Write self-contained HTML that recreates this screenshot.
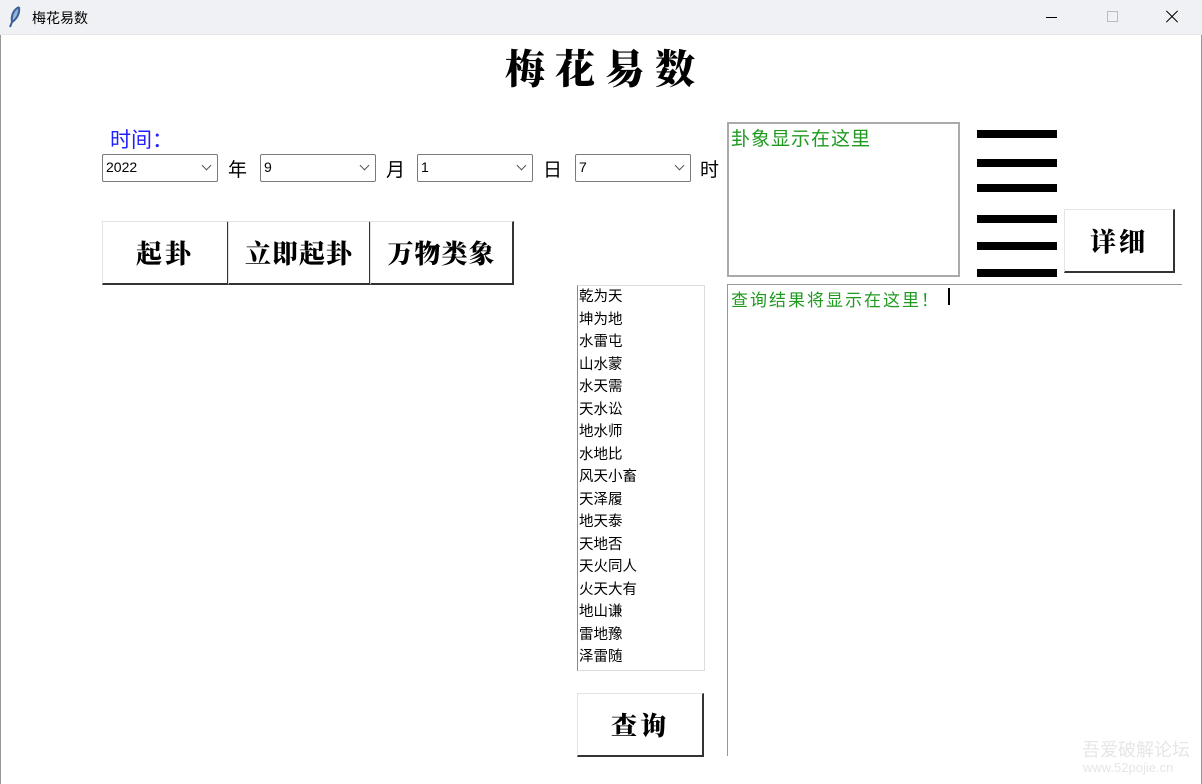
<!DOCTYPE html>
<html><head><meta charset="utf-8"><style>
*{margin:0;padding:0;box-sizing:border-box}
body{width:1202px;height:784px;background:#fff;position:relative;overflow:hidden;font-family:"Liberation Sans","Noto Sans CJK SC",sans-serif;color:#000}
.a{position:absolute}
.tb{left:0;top:0;width:1202px;height:35px;background:#eff1f4;border-bottom:1px solid #e5e5e5}
.cb{height:28px;width:116px;border:1px solid #7a7a7a;border-radius:2px;background:#fff;font-size:14px;padding:4px 3px;top:154px}
.cb::after{content:"";position:absolute;right:7px;top:7px;width:6px;height:6px;border-right:1px solid #555;border-bottom:1px solid #555;transform:rotate(45deg)}
.lb{font-size:19px;top:155px}
.btn{background:#fff;border-top:1px solid #e3e3e3;border-left:1px solid #e3e3e3;border-right:2px solid #333;border-bottom:2px solid #333;display:flex;align-items:center;justify-content:center;font-family:"Noto Serif CJK SC",serif;font-weight:900;font-size:26px;letter-spacing:3px}
.ln{left:977px;width:80px;height:8px;background:#000}
.li{font-size:14.5px;line-height:22.5px;left:579px}
.g{color:#1f9a1f;font-family:"Liberation Sans","Noto Sans CJK SC",sans-serif}
</style></head><body>
<div class="a tb"></div>
<svg class="a" style="left:8px;top:6px" width="14" height="22" viewBox="0 0 14 22"><path d="M11 1 C5 4 3 10 4 16 L2 21 M11 1 C12 7 9 13 4 16" stroke="#3a5f9a" stroke-width="2" fill="#8fb0d8"/></svg>
<div class="a" style="left:32px;top:8px;font-size:14px">梅花易数</div>
<div class="a" style="left:1046px;top:17px;width:11px;height:1px;background:#000"></div>
<div class="a" style="left:1107px;top:11px;width:11px;height:11px;border:1px solid #bbb"></div>
<div class="a" style="left:1164px;top:16px;width:16px;height:1px;background:#000;transform:rotate(45deg)"></div>
<div class="a" style="left:1164px;top:16px;width:16px;height:1px;background:#000;transform:rotate(-45deg)"></div>
<div class="a" style="left:0;top:35px;width:1px;height:749px;background:#999"></div>
<div class="a" style="left:1201px;top:35px;width:1px;height:749px;background:#999"></div>

<div class="a" style="left:490px;top:38px;width:220px;text-align:center;font-family:'Noto Serif CJK SC',serif;font-weight:900;font-size:40px;letter-spacing:10px;padding-left:10px">梅花易数</div>
<div class="a" style="left:110px;top:124px;font-size:21px;color:#2020ff">时间：</div>

<div class="a cb" style="left:102px">2022</div><div class="a lb" style="left:228px">年</div>
<div class="a cb" style="left:260px">9</div><div class="a lb" style="left:386px">月</div>
<div class="a cb" style="left:417px">1</div><div class="a lb" style="left:543px">日</div>
<div class="a cb" style="left:575px">7</div><div class="a lb" style="left:700px">时</div>

<div class="a btn" style="left:102px;top:221px;width:127px;height:64px">起卦</div>
<div class="a btn" style="left:228px;top:221px;width:143px;height:64px;letter-spacing:1px">立即起卦</div>
<div class="a btn" style="left:370px;top:221px;width:144px;height:64px;letter-spacing:1px">万物类象</div>

<div class="a" style="left:577px;top:285px;width:128px;height:386px;border:1px solid #ddd;border-left:1px solid #888"></div>
<div class="a" style="left:579px;top:286px">
<div class="li" style="position:static">乾为天<br>坤为地<br>水雷屯<br>山水蒙<br>水天需<br>天水讼<br>地水师<br>水地比<br>风天小畜<br>天泽履<br>地天泰<br>天地否<br>天火同人<br>火天大有<br>地山谦<br>雷地豫<br>泽雷随</div></div>

<div class="a btn" style="left:577px;top:693px;width:127px;height:64px">查询</div>

<div class="a" style="left:727px;top:122px;width:233px;height:155px;border:2px solid #aaa"></div>
<div class="a g" style="left:731px;top:124px;font-size:19px;letter-spacing:1px">卦象显示在这里</div>

<div class="a ln" style="top:130px"></div>
<div class="a ln" style="top:159px"></div>
<div class="a ln" style="top:184px"></div>
<div class="a ln" style="top:215px"></div>
<div class="a ln" style="top:242px"></div>
<div class="a ln" style="top:269px"></div>

<div class="a btn" style="left:1064px;top:209px;width:111px;height:64px">详细</div>

<div class="a" style="left:727px;top:284px;width:455px;height:1px;background:#999"></div>
<div class="a" style="left:727px;top:284px;width:1px;height:472px;background:#999"></div>
<div class="a g" style="left:731px;top:286px;font-size:17px;letter-spacing:2px">查询结果将显示在这里！</div>
<div class="a" style="left:948px;top:288px;width:2px;height:17px;background:#000"></div>

<div class="a" style="left:1082px;top:736px;font-size:18px;color:#e6e6e6">吾爱破解论坛</div>
<div class="a" style="left:1083px;top:760px;font-size:13px;color:#e6e6e6">www.52pojie.cn</div>
</body></html>
